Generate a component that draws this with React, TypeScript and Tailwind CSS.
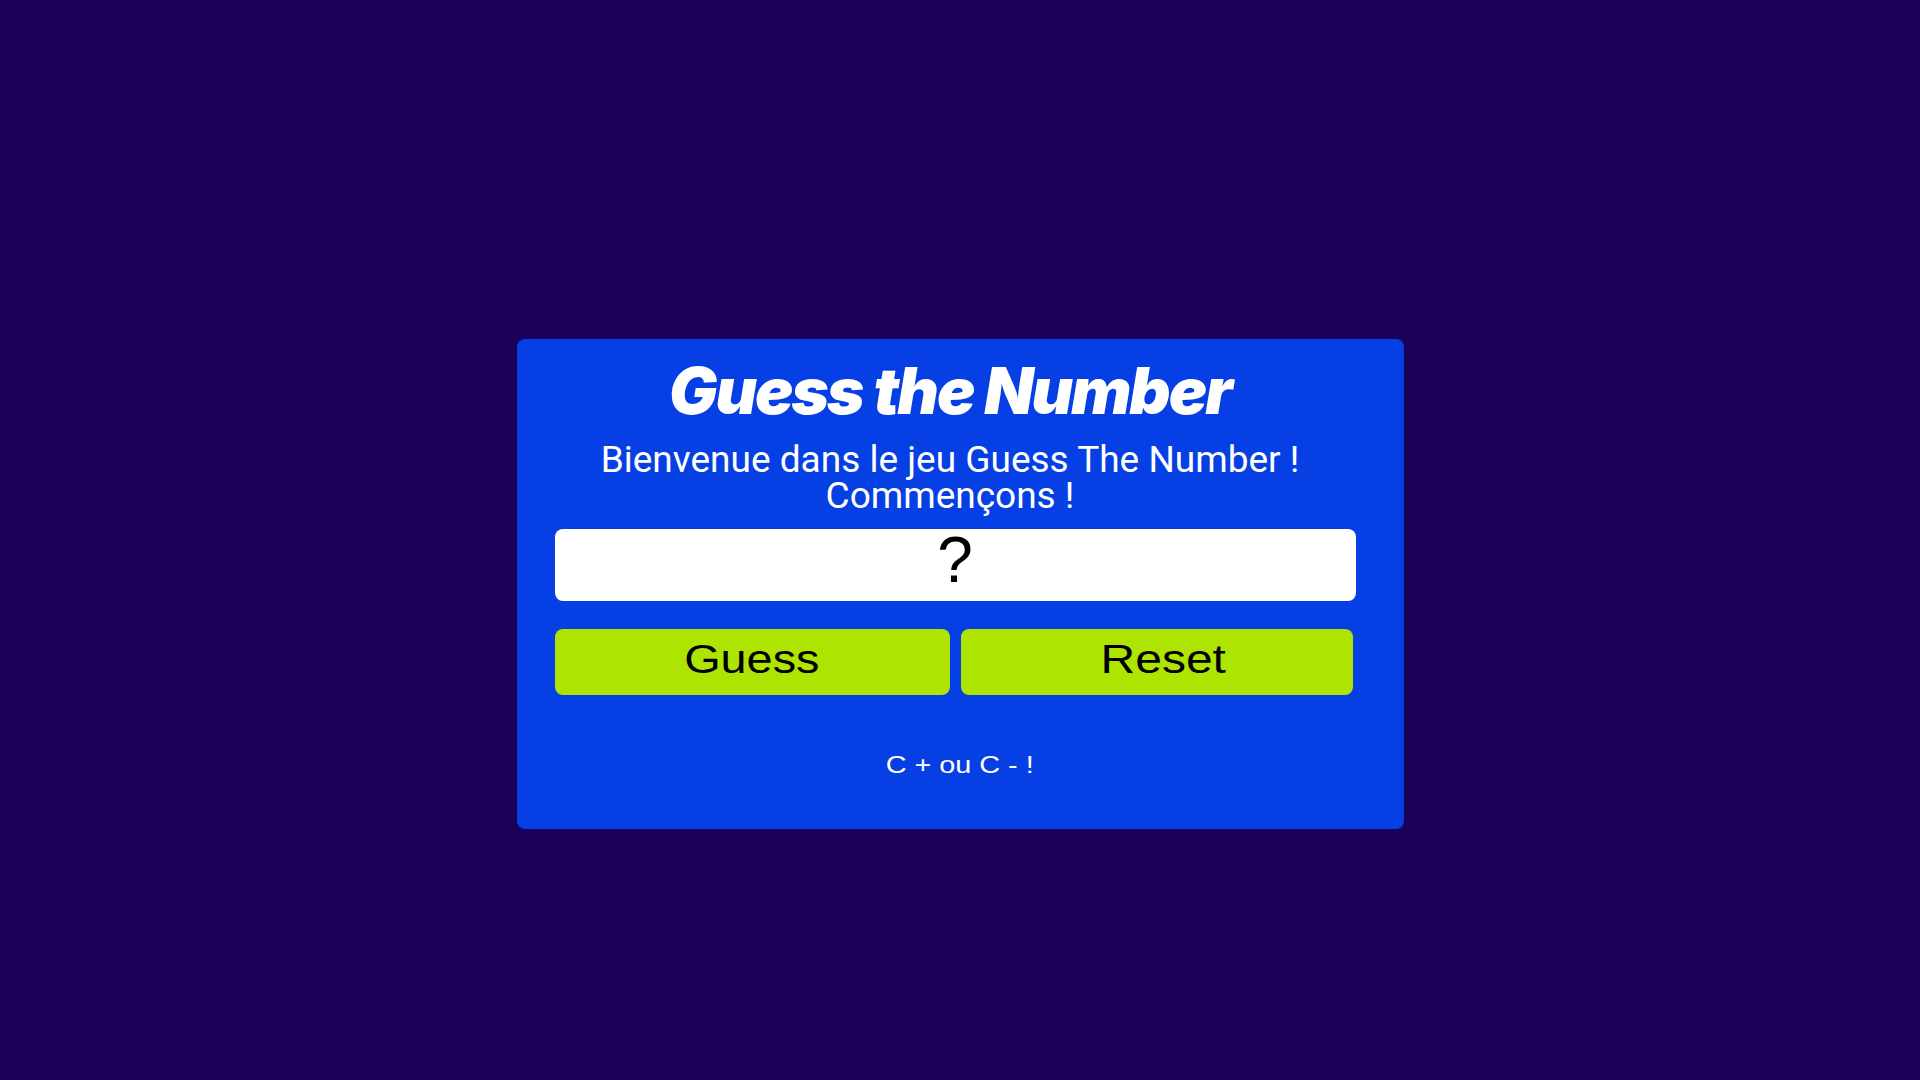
import React, { useState } from 'react';

const App: React.FC = () => {
    const [value] = useState('?');

    return (
        <div className="min-h-screen w-full bg-[#1b005a] pt-[339px]">
            <div className="mx-auto w-[887px] h-[490px] bg-[#0640e4] rounded-lg pl-[38px] pr-[48px] pt-[20px] flex flex-col">
                <h1
                    className="mr-[10px] text-center text-white text-[64px] leading-[64px] font-black italic tracking-[-2px]"
                    style={{ fontFamily: 'Inter, sans-serif' }}
                >
                    Guess the Number
                </h1>
                <div
                    className="mt-[19px] mr-[10px] text-center text-white text-[37px] leading-[36px]"
                    style={{ fontFamily: 'Roboto, sans-serif' }}
                >
                    <p>Bienvenue dans le jeu Guess The Number !</p>
                    <p>Commençons !</p>
                </div>
                <div
                    className="mt-[15px] h-[72px] w-full bg-white rounded-lg text-center text-black text-[64px] leading-[62px]"
                    style={{ fontFamily: '"Liberation Sans", Arial, sans-serif' }}
                >
                    {value}
                </div>
                <div className="mt-[28px] grid grid-cols-2 gap-[11px]">
                    <button className="h-[66px] bg-[#aee402] rounded-lg flex items-center justify-center text-black text-[40px] pb-[6px]">
                        <span className="inline-block scale-x-[1.17]" style={{ fontFamily: '"Liberation Sans", Arial, sans-serif' }}>
                            Guess
                        </span>
                    </button>
                    <button className="h-[66px] mr-[3px] bg-[#aee402] rounded-lg flex items-center justify-center text-black text-[40px] pb-[6px] pl-[14px]">
                        <span className="inline-block scale-x-[1.2]" style={{ fontFamily: '"Liberation Sans", Arial, sans-serif' }}>
                            Reset
                        </span>
                    </button>
                </div>
                <p
                    className="mt-[58px] ml-[10px] text-center text-white text-[24px] leading-[24px]"
                    style={{ fontFamily: '"Liberation Sans", Arial, sans-serif' }}
                >
                    <span className="inline-block scale-x-[1.2]">C + ou C - !</span>
                </p>
            </div>
        </div>
    );
};

export default App;
